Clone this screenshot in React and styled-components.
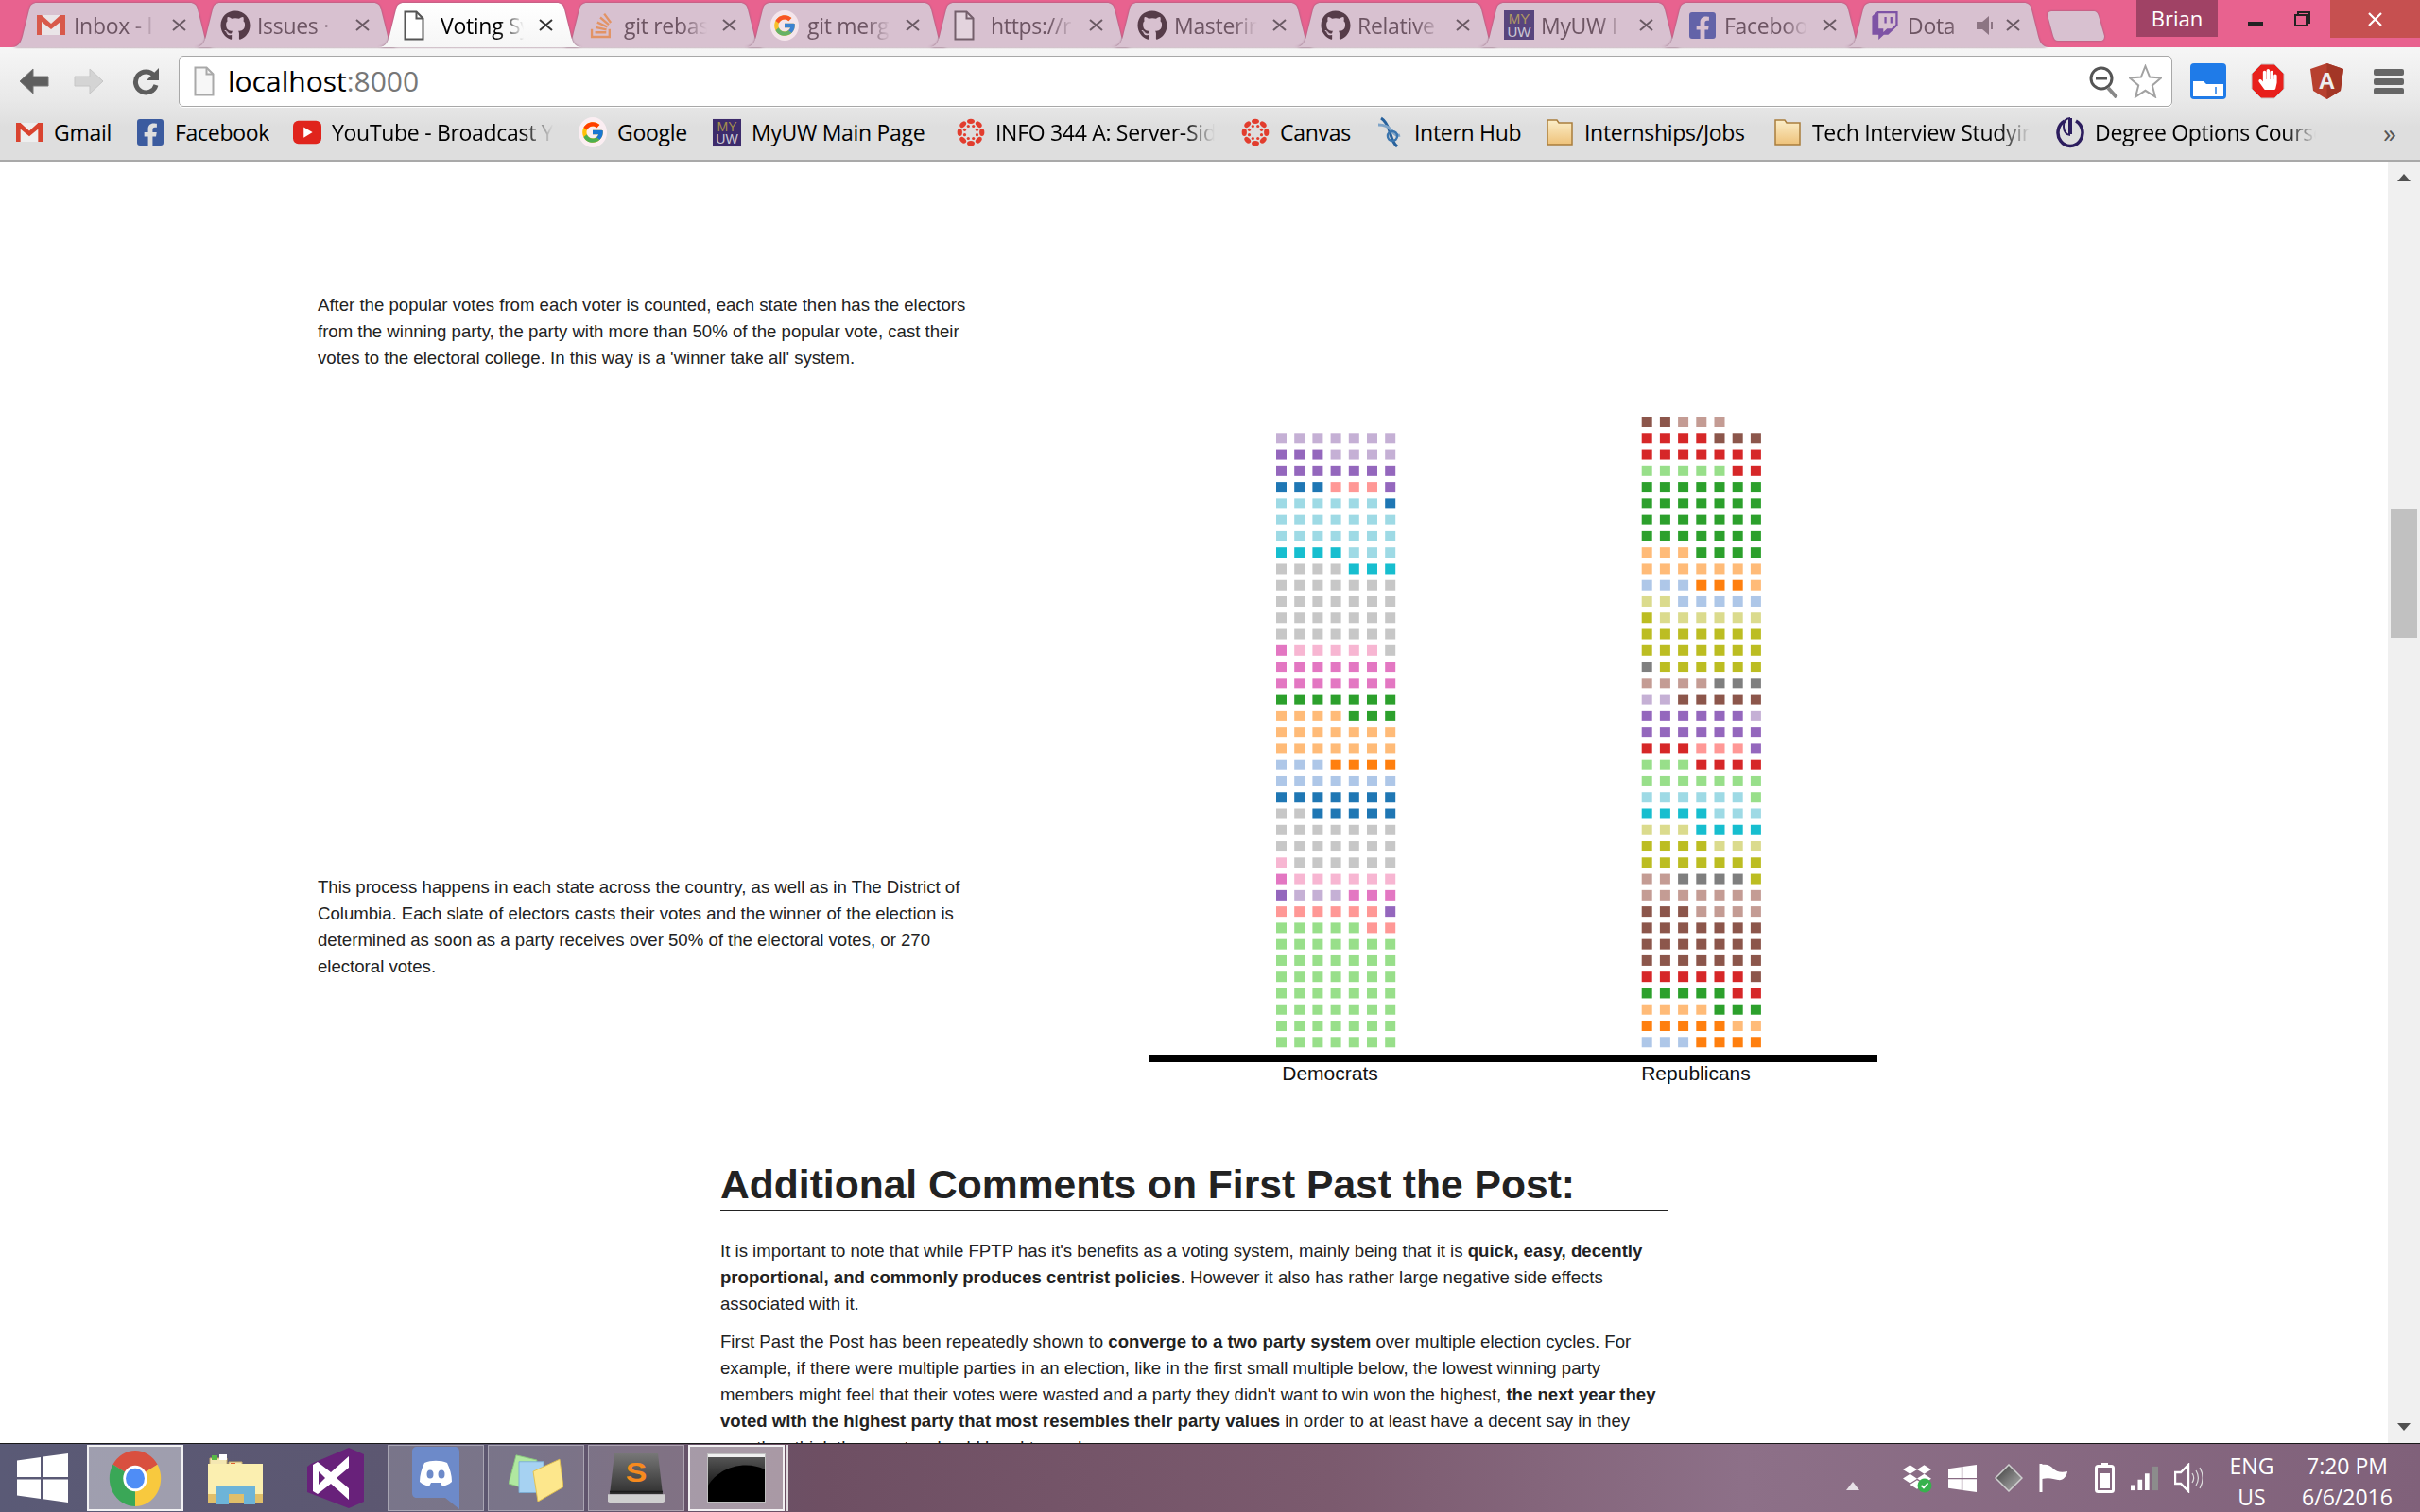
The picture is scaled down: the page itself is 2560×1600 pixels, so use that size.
import React from "react";
import styled, { createGlobalStyle } from "styled-components";
import { FaGithub, FaStackOverflow, FaFacebookSquare, FaTwitch, FaDropbox, FaHandPaper } from "react-icons/fa";
import { FcGoogle } from "react-icons/fc";

const GlobalStyle = createGlobalStyle`
  html, body {
    margin: 0;
    width: 2560px;
    height: 1600px;
    overflow: hidden;
    background: #fff;
  }
`;

const UI_FONT = `"Open Sans", "Noto Sans", sans-serif`;
const PAGE_FONT = `"Liberation Sans", Arial, sans-serif`;

const Screen = styled.div`
  width: 2560px;
  height: 1600px;
  display: flex;
  flex-direction: column;
  font-family: ${UI_FONT};
`;

/* ---------- tab strip ---------- */

const TabStrip = styled.div`
  height: 50px;
  flex: none;
  display: flex;
  align-items: flex-start;
  background: #e8628f;
`;

const TabRow = styled.div`
  display: flex;
  padding: 3px 0 0 12px;
`;

const Tab = styled.div`
  position: relative;
  width: 216px;
  height: 47px;
  margin-right: -22px;
  flex: none;
  display: flex;
  align-items: center;
  padding-left: 27px;
  box-sizing: border-box;
  z-index: ${(p) => (p.$active ? 2 : 1)};
  filter: drop-shadow(0 0 1px #8d5f78);
  color: ${(p) => (p.$active ? "#000" : "#6d5563")};

  &::before {
    content: "";
    position: absolute;
    inset: 0;
    background: ${(p) => (p.$active ? "linear-gradient(#fff, #f6f6f6)" : "#d8c1d0")};
    clip-path: path("M0 47 C9 47 11 40 13 31 L19 7 C20 2 23 0 27 0 L189 0 C193 0 196 2 197 7 L203 31 C205 40 207 47 216 47 Z");
  }

  & > * {
    position: relative;
  }
`;

const TabIcon = styled.span`
  width: 35px;
  margin-right: 4px;
  flex: none;
  display: flex;
  align-items: center;
  justify-content: flex-start;
  opacity: ${(p) => (p.$active ? 1 : 0.82)};
`;

const TabTitle = styled.span`
  width: ${(p) => p.$width}px;
  flex: none;
  font-size: 23px;
  letter-spacing: -0.3px;
  line-height: 30px;
  white-space: nowrap;
  overflow: hidden;
  -webkit-mask-image: linear-gradient(to right, #000 70%, transparent 100%);
  mask-image: linear-gradient(to right, #000 70%, transparent 100%);
`;

const TabSound = styled.span`
  width: 36px;
  flex: none;
  display: flex;
  justify-content: center;
  opacity: 0.7;
`;

const TabClose = styled.span`
  margin-left: ${(p) => p.$gap}px;
  display: flex;
  flex: none;
`;

const NewTab = styled.div`
  position: relative;
  width: 60px;
  height: 31px;
  margin: 12px 0 0 20px;
  filter: drop-shadow(0 0 1px #8d5f78);

  &::before {
    content: "";
    position: absolute;
    inset: 0;
    background: #d8c1d0;
    clip-path: path("M5 0 L48 0 C52 0 53 2 54 5 L60 26 C60 29 59 31 56 31 L11 31 C8 31 7 29 6 26 L0 4 C0 1 2 0 5 0 Z");
  }
`;

const WindowControls = styled.div`
  margin-left: auto;
  display: flex;
  align-items: flex-start;
`;

const ProfileName = styled.div`
  width: 86px;
  height: 39px;
  margin-right: 20px;
  background: #a04265;
  color: #fff;
  font-size: 22px;
  line-height: 39px;
  text-align: center;
`;

const CaptionButton = styled.div`
  width: ${(p) => p.$width}px;
  height: 40px;
  box-sizing: border-box;
  padding-top: ${(p) => p.$drop || 0}px;
  display: flex;
  align-items: center;
  justify-content: center;
  background: ${(p) => p.$bg || "transparent"};
`;

/* ---------- toolbar ---------- */

const BrowserChrome = styled.div`
  flex: none;
  background: linear-gradient(#f6f6f6 0%, #e9e9e9 45%, #dedede 70%, #dedede 100%);
`;

const Toolbar = styled.div`
  height: 63px;
  box-sizing: border-box;
  padding-top: 9px;
  display: flex;
  align-items: center;
`;

const NavButton = styled.div`
  width: ${(p) => p.$width}px;
  margin-left: ${(p) => p.$left}px;
  flex: none;
  display: flex;
  justify-content: center;
`;

const AddressBar = styled.div`
  width: 2109px;
  height: 54px;
  margin-left: 20px;
  padding: 0 10px 0 15px;
  box-sizing: border-box;
  flex: none;
  display: flex;
  align-items: center;
  background: #fff;
  border: 1px solid #a8a8a8;
  border-radius: 5px;
  box-shadow: 0 1px 0 #fff;
`;

const UrlHost = styled.span`
  margin-left: 14px;
  font-size: 30px;
  color: #000;
  line-height: 40px;
`;

const UrlPort = styled.span`
  color: #777;
`;

const AddressActions = styled.div`
  margin-left: auto;
  display: flex;
  align-items: center;
  gap: 11px;
`;

const ExtensionRow = styled.div`
  display: flex;
  align-items: center;
  margin-left: 19px;
`;

const ExtensionSlot = styled.div`
  width: ${(p) => p.$width}px;
  display: flex;
`;

/* ---------- bookmarks ---------- */

const BookmarkBar = styled.div`
  height: 58px;
  box-sizing: border-box;
  padding: 0 0 2px 16px;
  border-bottom: 2px solid #a9a9a9;
  display: flex;
  align-items: center;
`;

const Bookmark = styled.div`
  width: ${(p) => p.$width}px;
  flex: none;
  display: flex;
  align-items: center;
  gap: 11px;
`;

const BookmarkIcon = styled.span`
  width: 30px;
  flex: none;
  display: flex;
  justify-content: center;
`;

const BookmarkLabel = styled.span`
  font-size: 23px;
  letter-spacing: -0.3px;
  line-height: 32px;
  color: #000;
  white-space: nowrap;
  overflow: hidden;
  max-width: ${(p) => (p.$fade ? `${p.$fade}px` : "none")};
  ${(p) =>
    p.$fade
      ? `-webkit-mask-image: linear-gradient(to right, #000 86%, transparent 100%);
         mask-image: linear-gradient(to right, #000 86%, transparent 100%);`
      : ""}
`;

const MoreBookmarks = styled.span`
  margin-left: auto;
  margin-right: 25px;
  font-size: 28px;
  color: #555;
`;

/* ---------- page ---------- */

const Viewport = styled.div`
  flex: 1;
  min-height: 0;
  display: flex;
`;

const Page = styled.main`
  flex: 1;
  min-width: 0;
  overflow: hidden;
  background: #fff;
  font-family: ${PAGE_FONT};
  color: #222;
`;

const ChartSection = styled.section`
  display: flex;
  height: 989px;
`;

const StoryColumn = styled.div`
  width: 1026px;
  flex: none;
  box-sizing: border-box;
  padding: 138px 0 0 336px;
`;

const StoryText = styled.p`
  width: 692px;
  margin: 0 0 ${(p) => p.$after || 0}px;
  font-size: 18.6px;
  line-height: 28px;
`;

const ChartFigure = styled.figure`
  margin: 259px 0 0 189px;
`;

const Article = styled.article`
  width: 1002px;
  margin: 68px 0 0 762px;
`;

const ArticleTitle = styled.h2`
  margin: 0 0 28px;
  padding-bottom: 2px;
  font-size: 42.6px;
  line-height: 50px;
  font-weight: 700;
  color: #222;
  border-bottom: 2px solid #222;
`;

const ArticleText = styled.p`
  margin: 0 0 12px;
  padding-right: 6px;
  font-size: 18.6px;
  line-height: 28px;

  strong {
    font-weight: 700;
  }
`;

const Scrollbar = styled.div`
  width: 34px;
  flex: none;
  display: flex;
  flex-direction: column;
  align-items: center;
  background: #f0f0f0;
`;

const ScrollArrow = styled.div`
  height: 34px;
  flex: none;
  display: flex;
  align-items: center;
  justify-content: center;
`;

const ScrollThumb = styled.div`
  width: 28px;
  height: 136px;
  margin-top: 334px;
  background: #c1c1c1;
`;

const ScrollTrackFill = styled.div`
  flex: 1;
`;

/* ---------- taskbar ---------- */

const Taskbar = styled.footer`
  height: 73px;
  flex: none;
  box-sizing: border-box;
  border-top: 1px solid #1a1a1a;
  display: flex;
  align-items: stretch;
  background: linear-gradient(to right, #5a5a76 0%, #5d566f 22%, #6e4f63 34%, #7b5a6e 55%, #8d7088 72%, #80617a 100%);
`;

const StartButton = styled.div`
  width: 92px;
  flex: none;
  display: flex;
  align-items: center;
  justify-content: flex-start;
  padding-left: 18px;
  box-sizing: border-box;
`;

const TaskList = styled.div`
  display: flex;
  gap: 4px;
  padding-top: 1px;
`;

const TaskButton = styled.div`
  position: relative;
  width: 102px;
  height: 70px;
  box-sizing: border-box;
  display: flex;
  align-items: center;
  justify-content: center;
  border: ${(p) =>
    p.$state === "active"
      ? "2px solid rgba(255,255,255,.85)"
      : p.$state === "open"
      ? "1px solid rgba(255,255,255,.35)"
      : "1px solid transparent"};
  background: ${(p) =>
    p.$state === "active" ? "rgba(255,255,255,.42)" : p.$state === "open" ? "rgba(255,255,255,.18)" : "transparent"};

  ${(p) =>
    p.$stacked
      ? `&::after {
          content: "";
          position: absolute;
          top: -2px;
          right: -6px;
          bottom: -2px;
          width: 2px;
          background: rgba(255, 255, 255, 0.8);
        }`
      : ""}
`;

const Tray = styled.div`
  margin-left: auto;
  display: flex;
  align-items: center;
`;

const TrayIcon = styled.span`
  width: ${(p) => p.$width}px;
  margin-top: ${(p) => p.$drop || 0}px;
  flex: none;
  display: flex;
  justify-content: center;
`;

const TrayText = styled.div`
  width: ${(p) => p.$width}px;
  padding-top: 7px;
  flex: none;
  color: #fff;
  font-size: 23px;
  line-height: 33px;
  text-align: center;
`;

/* ---------- icons ---------- */

const GmailIcon = ({ w = 30, h = 21 }) => (
  <svg width={w} height={h} viewBox="0 0 30 21" preserveAspectRatio="none">
    <rect width="30" height="21" fill="#eeeeee" />
    <path d="M0 0h5v21H0zM25 0h5v21h-5z" fill="#d9432f" />
    <path d="M0 0h5l10 9 10-9h5v3L15 15 0 3z" fill="#d9432f" />
  </svg>
);

const DocIcon = ({ color = "#555", fill = "#fff" }) => (
  <svg width="22" height="32" viewBox="0 0 22 32">
    <path d="M1.5 1.5h12l7 7v22h-19z" fill={fill} stroke={color} strokeWidth="2" />
    <path d="M13.5 1.5v7h7" fill="none" stroke={color} strokeWidth="2" />
  </svg>
);

const GoogleIcon = () => (
  <svg width="30" height="32" viewBox="0 0 30 32">
    <ellipse cx="15" cy="16" rx="15" ry="16" fill="#fbeef2" />
    <foreignObject x="2" y="3" width="26" height="26">
      <FcGoogle size={26} />
    </foreignObject>
  </svg>
);

const MyUwIcon = ({ w = 32, h = 31 }) => (
  <svg width={w} height={h} viewBox="0 0 32 31">
    <rect width="32" height="31" fill="#3d2b6b" />
    <text x="16" y="14" fontSize="15" fontFamily="Liberation Sans" fill="#a58f4b" textAnchor="middle">MY</text>
    <text x="16" y="28" fontSize="15" fontFamily="Liberation Sans" fill="#c9c9d6" textAnchor="middle">UW</text>
  </svg>
);

const YouTubeIcon = () => (
  <svg width="32" height="30" viewBox="0 0 32 30">
    <rect x="0" y="2" width="32" height="26" rx="6" fill="#e0241c" />
    <path d="M12 9l10 6-10 6z" fill="#fff" />
  </svg>
);

const CanvasIcon = () => (
  <svg width="32" height="32" viewBox="0 0 32 32">
    <g fill="#e23d2e">
      {Array.from({ length: 8 }).map((_, i) => {
        const a = (i * Math.PI) / 4;
        return (
          <React.Fragment key={i}>
            <ellipse
              cx="16"
              cy="3.5"
              rx="4.2"
              ry="2.8"
              transform={`rotate(${(i * 360) / 8} 16 16)`}
            />
            <circle cx={16 + 7.5 * Math.cos(a + Math.PI / 8)} cy={16 + 7.5 * Math.sin(a + Math.PI / 8)} r="1.7" />
          </React.Fragment>
        );
      })}
    </g>
  </svg>
);

const InternHubIcon = () => (
  <svg width="30" height="34" viewBox="0 0 30 34">
    <path d="M6 2c5 3 7 8 9 14s3 12 8 16" fill="none" stroke="#27619c" strokeWidth="3" />
    <path d="M3 9c6 0 11 2 14 6s6 6 9 5" fill="none" stroke="#7fa4c8" strokeWidth="3" />
    <circle cx="18" cy="21" r="5" fill="none" stroke="#3b75ad" strokeWidth="2.5" />
  </svg>
);

const FolderIcon = () => (
  <svg width="28" height="32" viewBox="0 0 28 32">
    <defs>
      <linearGradient id="folderFill" x1="0" y1="0" x2="0" y2="1">
        <stop offset="0" stopColor="#fbeec9" />
        <stop offset="1" stopColor="#eec27a" />
      </linearGradient>
    </defs>
    <path d="M1 3h10l2 3h14v23H1z" fill="url(#folderFill)" stroke="#a97d3c" strokeWidth="1.5" />
  </svg>
);

const DegreeIcon = () => (
  <svg width="30" height="36" viewBox="0 0 30 36">
    <path d="M9 6a13 14 0 1 0 12 0" fill="none" stroke="#2c1d5e" strokeWidth="3.5" />
    <path d="M15 3c-5 0-7 4-7 9s3 9 7 9" fill="none" stroke="#2c1d5e" strokeWidth="2" />
    <rect x="13" y="3" width="4" height="17" fill="#2c1d5e" />
  </svg>
);

const CloseGlyph = ({ color = "#6a5a64" }) => (
  <svg width="15" height="13" viewBox="0 0 15 13">
    <path d="M1 1l13 11M14 1L1 12" stroke={color} strokeWidth="2" fill="none" />
  </svg>
);

const SoundGlyph = () => (
  <svg width="20" height="24" viewBox="0 0 20 24">
    <path d="M1 8h6l7-6v20l-7-6H1z" fill="#6d5563" />
    <path d="M17 8v8" stroke="#6d5563" strokeWidth="2" />
  </svg>
);

const BackIcon = ({ color, shadow }) => (
  <svg width="32" height="28" viewBox="0 0 32 28">
    <path d="M15 1L1 14l14 13v-8h16V9H15z" fill={color} stroke={shadow} strokeWidth="1" />
  </svg>
);

const ForwardIcon = () => (
  <svg width="32" height="28" viewBox="0 0 32 28">
    <path d="M17 1l14 13-14 13v-8H1V9h16z" fill="#d4d4d4" stroke="#c6c6c6" strokeWidth="1" />
  </svg>
);

const ReloadIcon = () => (
  <svg width="30" height="30" viewBox="0 0 30 30">
    <path d="M24 9a11 11 0 1 0 2 10" fill="none" stroke="#5c5c5c" strokeWidth="5" />
    <path d="M29 1v13H16z" fill="#5c5c5c" />
  </svg>
);

const ZoomOutIcon = () => (
  <svg width="31" height="35" viewBox="0 0 31 35">
    <circle cx="13" cy="14" r="11" fill="none" stroke="#555" strokeWidth="3" />
    <path d="M7 14h12" stroke="#555" strokeWidth="3" />
    <path d="M20 24l9 10" stroke="#888" strokeWidth="4" />
  </svg>
);

const StarIcon = () => (
  <svg width="35" height="36" viewBox="0 0 35 36">
    <path
      d="M17.5 2l4.6 11.5 12 .9-9.3 8 3.1 12.1-10.4-6.7-10.4 6.7 3.1-12.1-9.3-8 12-.9z"
      fill="#fff"
      stroke="#a2a2a2"
      strokeWidth="2"
    />
  </svg>
);

const DriveExtIcon = () => (
  <svg width="38" height="38" viewBox="0 0 38 38">
    <rect width="38" height="38" rx="4" fill="#1f7be8" />
    <path d="M3 19h11l3 3h18v13H3z" fill="#fff" />
    <path d="M27 25v7" stroke="#1f7be8" strokeWidth="1.5" />
  </svg>
);

const AdblockIcon = () => (
  <svg width="36" height="38" viewBox="0 0 36 38">
    <path d="M11 1h14l10 10v16L25 37H11L1 27V11z" fill="#e8201c" stroke="#c7c7c7" strokeWidth="1" />
    <foreignObject x="7" y="6" width="22" height="26">
      <FaHandPaper size={22} color="#fff" />
    </foreignObject>
  </svg>
);

const AngularIcon = () => (
  <svg width="35" height="38" viewBox="0 0 35 38">
    <path d="M17.5 0L35 6l-3 23-14.5 9L3 29 0 6z" fill="#b7402f" />
    <path d="M17.5 0L35 6l-3 23-14.5 9z" fill="#a33626" />
    <text x="17.5" y="27" fontSize="24" fontWeight="700" fontFamily="Liberation Sans" fill="#eee" textAnchor="middle">A</text>
  </svg>
);

const MenuIcon = () => (
  <svg width="32" height="27" viewBox="0 0 32 27">
    <rect width="32" height="7" rx="2" fill="#666" />
    <rect y="10" width="32" height="7" rx="2" fill="#666" />
    <rect y="20" width="32" height="7" rx="2" fill="#666" />
  </svg>
);

const WindowsLogo = ({ w = 54, h = 52, color = "#fff" }) => (
  <svg width={w} height={h} viewBox="0 0 54 52">
    <path d="M0 7.5l25-3.5v21H0zM27.5 3.5L54 0v25H27.5zM0 27.5h25V48L0 44.5zM27.5 27.5H54V52l-26.5-3.7z" fill={color} />
  </svg>
);

const ChromeLogo = () => (
  <svg width="58" height="63" viewBox="0 0 64 64" preserveAspectRatio="none">
    <path d="M32 32L6 17A30 30 0 0 1 58 17z" fill="#d9503f" />
    <path d="M32 32L58 17A30 30 0 0 1 32 62z" fill="#f8c93e" />
    <path d="M32 32L32 62A30 30 0 0 1 6 17z" fill="#3aa757" />
    <circle cx="32" cy="32" r="14" fill="#fff" />
    <circle cx="32" cy="32" r="11" fill="#4f8df6" />
  </svg>
);

const ExplorerIcon = () => (
  <svg width="58" height="55" viewBox="0 0 58 55">
    <path d="M2 6h18v8H2z" fill="#f4e7b2" stroke="#c9ad6b" />
    <path d="M12 2h8v6h-8z" fill="#fff" />
    <path d="M4 3h6v5H4z" fill="#58b848" />
    <path d="M22 10h14v6H22z" fill="#f4e7b2" stroke="#c9ad6b" />
    <path d="M24 11h5v4h-5z" fill="#e0612f" />
    <path d="M33 15h14v6H33z" fill="#f4e7b2" stroke="#c9ad6b" />
    <path d="M35 16h5v4h-5z" fill="#3b8fd8" />
    <path d="M0 12h58v41H0z" fill="#fbefb0" />
    <path d="M0 44h58v9H0z" fill="#e0bf6a" />
    <path d="M8 36h42v19H38V44H22v11H8z" fill="#6db4d8" />
  </svg>
);

const VsLogo = () => (
  <svg width="60" height="64" viewBox="0 0 60 64">
    <path d="M44 0l16 7v50l-16 7L0 47V20l4-3z" fill="#68217a" />
    <path d="M44 9v12l-13 11 13 11v12L25 38 11 49 6 46V18l5-3 14 11z" fill="#fff" />
    <path d="M12 25v14l7-7z" fill="#68217a" />
  </svg>
);

const DiscordIcon = () => (
  <svg width="50" height="66" viewBox="0 0 50 66">
    <path d="M5 0h40c3 0 5 2 5 5v61L35 54H5c-3 0-5-2-5-5V5c0-3 2-5 5-5z" fill="#6d8ac9" />
    <path d="M13 17c7-3 17-3 24 0 3 6 5 13 5 20-3 3-7 4-10 5l-2-4H20l-2 4c-3-1-7-2-10-5 0-7 2-14 5-20z" fill="#fff" />
    <ellipse cx="19" cy="29" rx="3.5" ry="4.5" fill="#6d8ac9" />
    <ellipse cx="31" cy="29" rx="3.5" ry="4.5" fill="#6d8ac9" />
  </svg>
);

const NotesIcon = () => (
  <svg width="58" height="50" viewBox="0 0 58 58" preserveAspectRatio="none">
    <path d="M8 1l22 6-6 37L0 36z" fill="#b0e8a0" stroke="#89c87c" />
    <path d="M11 9h26v38H11z" fill="#a6d2f2" stroke="#7caed6" />
    <path d="M54 6l4 34-27 18-5-37z" fill="#fde78c" stroke="#e0c050" />
  </svg>
);

const SublimeIcon = () => (
  <svg width="60" height="52" viewBox="0 0 60 60" preserveAspectRatio="none">
    <defs>
      <linearGradient id="sublimeBody" x1="0" y1="0" x2="0" y2="1">
        <stop offset="0" stopColor="#777" />
        <stop offset="1" stopColor="#2f2f2f" />
      </linearGradient>
    </defs>
    <path d="M7 0h46l5 50H2z" fill="url(#sublimeBody)" />
    <path d="M2 46h56v2H2z" fill="#1c1c1c" />
    <path d="M0 50h60v8a2 2 0 0 1-2 2H2a2 2 0 0 1-2-2z" fill="#cfcfcf" />
    <text x="30" y="35" fontSize="34" fontWeight="700" fontFamily="Liberation Sans" fill="#f68a1e" textAnchor="middle">S</text>
  </svg>
);

const TerminalIcon = () => (
  <svg width="62" height="52" viewBox="0 0 62 52">
    <defs>
      <linearGradient id="termGlow" x1="0" y1="0" x2="0" y2="1">
        <stop offset="0" stopColor="#555" />
        <stop offset="1" stopColor="#1a1a1a" />
      </linearGradient>
    </defs>
    <rect width="62" height="52" fill="#bfbfbf" />
    <rect x="1" y="1" width="60" height="3" fill="#f0f0f0" />
    <rect x="1" y="4" width="60" height="47" fill="#000" />
    <path d="M1 4h60v13C44 8 14 12 1 34z" fill="url(#termGlow)" />
  </svg>
);

const TrayArrow = () => (
  <svg width="14" height="9" viewBox="0 0 14 9">
    <path d="M7 0l7 9H0z" fill="#e6e0e6" />
  </svg>
);

const DropboxTray = () => (
  <svg width="31" height="32" viewBox="0 0 31 32">
    <foreignObject x="0" y="0" width="30" height="30">
      <FaDropbox size={30} color="#fff" />
    </foreignObject>
    <circle cx="23" cy="24" r="7.5" fill="#37b24d" />
    <path d="M19.5 24l2.5 2.5 4.5-5" stroke="#fff" strokeWidth="1.8" fill="none" />
  </svg>
);

const DiamondTray = () => (
  <svg width="30" height="30" viewBox="0 0 30 30">
    <defs>
      <linearGradient id="diamondFill" x1="0" y1="0" x2="1" y2="1">
        <stop offset="0" stopColor="#3a3a3a" />
        <stop offset="1" stopColor="#b5b5b5" />
      </linearGradient>
    </defs>
    <path d="M15 1l14 14-14 14L1 15z" fill="url(#diamondFill)" stroke="#cfcfcf" strokeWidth="1.5" />
  </svg>
);

const FlagTray = () => (
  <svg width="32" height="32" viewBox="0 0 32 32">
    <path d="M2 1v30" stroke="#fff" strokeWidth="3" />
    <path d="M3 2c6-1 9 1 12 4s8 5 15 3c-1 6-5 10-10 9s-9-3-17-1z" fill="#fff" />
  </svg>
);

const BatteryTray = () => (
  <svg width="21" height="32" viewBox="0 0 21 32">
    <path d="M7 0h7v3H7z" fill="#fff" />
    <rect x="1.5" y="3.5" width="18" height="27" rx="2" fill="none" stroke="#fff" strokeWidth="3" />
    <rect x="5" y="11" width="11" height="16" fill="#fff" />
  </svg>
);

const SignalTray = () => (
  <svg width="31" height="28" viewBox="0 0 31 28">
    <path d="M0 22h5v6H0z" fill="#fff" />
    <path d="M8 16h5v12H8zM16 9h5v19h-5z" fill="#fff" />
    <path d="M24 1h7v27h-7z" fill="#8c8c8c" />
  </svg>
);

const SpeakerTray = () => (
  <svg width="30" height="32" viewBox="0 0 30 32">
    <path d="M1 10h6l8-8v28l-8-8H1z" fill="none" stroke="#fff" strokeWidth="2.4" />
    <path d="M19 11c2 3 2 7 0 10M23 8c3 5 3 11 0 16M27 5c4 7 4 15 0 22" stroke="#ddd" strokeWidth="1.2" fill="none" />
  </svg>
);

/* ---------- data ---------- */

const TABS = [
  { title: "Inbox - l", icon: <GmailIcon /> },
  { title: "Issues · ", icon: <FaGithub size={32} color="#3a1f2c" /> },
  { title: "Voting System", icon: <DocIcon />, active: true },
  { title: "git rebase", icon: <FaStackOverflow size={30} color="#e58a4e" /> },
  { title: "git merge", icon: <GoogleIcon /> },
  { title: "https://r", icon: <DocIcon color="#5f4a56" fill="#e6d8e0" /> },
  { title: "Mastering", icon: <FaGithub size={32} color="#3a1f2c" /> },
  { title: "Relative", icon: <FaGithub size={32} color="#3a1f2c" /> },
  { title: "MyUW I", icon: <MyUwIcon /> },
  { title: "Facebook", icon: <FaFacebookSquare size={32} color="#4a4fa0" /> },
  { title: "Dota", icon: <FaTwitch size={30} color="#6b3b9c" />, sound: true },
];

const BOOKMARKS = [
  { label: "Gmail", width: 128, icon: <GmailIcon w={28} h={20} /> },
  { label: "Facebook", width: 166, icon: <FaFacebookSquare size={32} color="#3b5b9f" /> },
  { label: "YouTube - Broadcast Yourself", width: 302, fade: 234, icon: <YouTubeIcon /> },
  { label: "Google", width: 142, icon: <GoogleIcon /> },
  { label: "MyUW Main Page", width: 258, icon: <MyUwIcon /> },
  { label: "INFO 344 A: Server-Side", width: 301, fade: 232, icon: <CanvasIcon /> },
  { label: "Canvas", width: 142, icon: <CanvasIcon /> },
  { label: "Intern Hub", width: 180, icon: <InternHubIcon /> },
  { label: "Internships/Jobs", width: 241, icon: <FolderIcon /> },
  { label: "Tech Interview Studying", width: 299, fade: 230, icon: <FolderIcon /> },
  { label: "Degree Options Course", width: 290, fade: 234, icon: <DegreeIcon /> },
];

const TASKS = [
  { state: "active", icon: <ChromeLogo /> },
  { state: "idle", icon: <ExplorerIcon /> },
  { state: "idle", icon: <VsLogo /> },
  { state: "open", icon: <DiscordIcon /> },
  { state: "open", icon: <NotesIcon /> },
  { state: "open", icon: <SublimeIcon /> },
  { state: "active", icon: <TerminalIcon />, stacked: true },
];

const PALETTE = {
  a: "#1f77b4", b: "#aec7e8", c: "#ff7f0e", d: "#ffbb78", e: "#2ca02c",
  f: "#98df8a", g: "#d62728", h: "#ff9896", i: "#9467bd", j: "#c5b0d5",
  k: "#8c564b", l: "#c49c94", m: "#e377c2", n: "#f7b6d2", o: "#7f7f7f",
  p: "#c7c7c7", q: "#bcbd22", r: "#dbdb8d", s: "#17becf", t: "#9edae5",
};

const DEMOCRAT_ROWS = [
  "jjjjjjj", "iiijjjj", "iiiiiii", "aaahhhi", "tttttta", "ttttttt", "ttttttt", "ssssttt",
  "ppppsss", "ppppppp", "ppppppp", "ppppppp", "ppppppp", "mnnnnnp", "mmmmmmm", "mmmmmmm",
  "eeeeeee", "ddddeee", "ddddddd", "ddddddd", "bbbcccc", "bbbbbbb", "aaaaaaa", "ppaaaaa",
  "ppppppp", "ppppppp", "npppppp", "mnnnnnn", "ijjjmmm", "hhhhhhi", "fffffhh", "fffffff",
  "fffffff", "fffffff", "fffffff", "fffffff", "fffffff", "fffffff",
];

const REPUBLICAN_ROWS = [
  "kklll", "ggggkkk", "ggggggg", "fffffgg", "eeeeeee", "eeeeeee", "eeeeeee", "eeeeeee",
  "dddeeee", "ddddddd", "bbbcccd", "rrbbbbb", "qrrrrrr", "qqqqqqq", "qqqqqqq", "oqqqqqq",
  "llllooo", "jjkkkkk", "iiiiiij", "iiiiiii", "ggghhhi", "fffgggg", "fffffff", "ttttttf",
  "ssssttt", "rrrssss", "qqqqrrr", "qqqqqqq", "llooooq", "lllllll", "kkkllll", "kkkkkkk",
  "kkkkkkk", "kkkkkkk", "ggggggk", "eeeeegg", "ddddeee", "cccccdd", "bbbcccc",
];

/* chart coordinates are relative to the svg's origin (x 1215, y 430 on screen) */
const CELL = 11;
const COL_STEP = 19.2;
const ROW_STEP = 17.27;

function VoteBlock({ rows, x, y }) {
  return rows.map((row, r) =>
    row.split("").map((code, c) => (
      <rect
        key={`${r}-${c}`}
        x={x + c * COL_STEP}
        y={y + r * ROW_STEP}
        width={CELL}
        height={CELL}
        fill={PALETTE[code]}
      />
    ))
  );
}

function VoteChart() {
  return (
    <svg width="772" height="730" viewBox="0 0 772 730">
      <VoteBlock rows={DEMOCRAT_ROWS} x={135} y={28.3} />
      <VoteBlock rows={REPUBLICAN_ROWS} x={521.7} y={11} />
      <rect x="0" y="686" width="771" height="8" fill="#000" />
      <text x="192" y="713" fontSize="21" fill="#111" textAnchor="middle" fontFamily={PAGE_FONT}>Democrats</text>
      <text x="579" y="713" fontSize="21" fill="#111" textAnchor="middle" fontFamily={PAGE_FONT}>Republicans</text>
    </svg>
  );
}

export default function App() {
  return (
    <Screen>
      <GlobalStyle />
      <TabStrip>
        <TabRow>
          {TABS.map((tab) => (
            <Tab key={tab.title} $active={tab.active}>
              <TabIcon $active={tab.active}>{tab.icon}</TabIcon>
              <TabTitle $width={tab.sound ? 64 : 88}>{tab.title}</TabTitle>
              {tab.sound && (
                <TabSound>
                  <SoundGlyph />
                </TabSound>
              )}
              <TabClose $gap={tab.sound ? 4 : 16}>
                <CloseGlyph color={tab.active ? "#333" : "#6a5a64"} />
              </TabClose>
            </Tab>
          ))}
        </TabRow>
        <NewTab />
        <WindowControls>
          <ProfileName>Brian</ProfileName>
          <CaptionButton $width={40} $drop={10}>
            <svg width="16" height="5" viewBox="0 0 16 5">
              <rect width="16" height="5" fill="#222" />
            </svg>
          </CaptionButton>
          <CaptionButton $width={59}>
            <svg width="17" height="16" viewBox="0 0 17 16">
              <path d="M4 3V1h12v11h-2" fill="none" stroke="#222" strokeWidth="2" />
              <rect x="1" y="4" width="12" height="11" fill="none" stroke="#222" strokeWidth="2" />
            </svg>
          </CaptionButton>
          <CaptionButton $width={95} $bg="#c65050">
            <svg width="15" height="15" viewBox="0 0 15 15">
              <path d="M1 1l13 13M14 1L1 14" stroke="#fff" strokeWidth="2.2" />
            </svg>
          </CaptionButton>
        </WindowControls>
      </TabStrip>

      <BrowserChrome>
        <Toolbar>
          <NavButton $width={32} $left={20}>
            <BackIcon color="#5f5f5f" shadow="#777" />
          </NavButton>
          <NavButton $width={32} $left={26}>
            <ForwardIcon />
          </NavButton>
          <NavButton $width={30} $left={29}>
            <ReloadIcon />
          </NavButton>
          <AddressBar>
            <DocIcon color="#a9a9a9" fill="#f7f7f7" />
            <UrlHost>
              localhost<UrlPort>:8000</UrlPort>
            </UrlHost>
            <AddressActions>
              <ZoomOutIcon />
              <StarIcon />
            </AddressActions>
          </AddressBar>
          <ExtensionRow>
            <ExtensionSlot $width={64}>
              <DriveExtIcon />
            </ExtensionSlot>
            <ExtensionSlot $width={63}>
              <AdblockIcon />
            </ExtensionSlot>
            <ExtensionSlot $width={67}>
              <AngularIcon />
            </ExtensionSlot>
            <ExtensionSlot $width={32}>
              <MenuIcon />
            </ExtensionSlot>
          </ExtensionRow>
        </Toolbar>
        <BookmarkBar>
          {BOOKMARKS.map((b) => (
            <Bookmark key={b.label} $width={b.width}>
              <BookmarkIcon>{b.icon}</BookmarkIcon>
              <BookmarkLabel $fade={b.fade}>{b.label}</BookmarkLabel>
            </Bookmark>
          ))}
          <MoreBookmarks>»</MoreBookmarks>
        </BookmarkBar>
      </BrowserChrome>

      <Viewport>
        <Page>
          <ChartSection>
            <StoryColumn>
              <StoryText $after={532}>
                After the popular votes from each voter is counted, each state then has the electors from the winning
                party, the party with more than 50% of the popular vote, cast their votes to the electoral college. In
                this way is a 'winner take all' system.
              </StoryText>
              <StoryText>
                This process happens in each state across the country, as well as in The District of Columbia. Each
                slate of electors casts their votes and the winner of the election is determined as soon as a party
                receives over 50% of the electoral votes, or 270 electoral votes.
              </StoryText>
            </StoryColumn>
            <ChartFigure>
              <VoteChart />
            </ChartFigure>
          </ChartSection>
          <Article>
            <ArticleTitle>Additional Comments on First Past the Post:</ArticleTitle>
            <ArticleText>
              It is important to note that while FPTP has it's benefits as a voting system, mainly being that it is{" "}
              <strong>quick, easy, decently proportional, and commonly produces centrist policies</strong>. However it
              also has rather large negative side effects associated with it.
            </ArticleText>
            <ArticleText>
              First Past the Post has been repeatedly shown to <strong>converge to a two party system</strong> over
              multiple election cycles. For example, if there were multiple parties in an election, like in the first
              small multiple below, the lowest winning party members might feel that their votes were wasted and a party
              they didn't want to win won the highest,{" "}
              <strong>the next year they voted with the highest party that most resembles their party values</strong> in
              order to at least have a decent say in they way they think the country should head towards.
            </ArticleText>
          </Article>
        </Page>
        <Scrollbar>
          <ScrollArrow>
            <svg width="14" height="8" viewBox="0 0 14 8">
              <path d="M7 0l7 8H0z" fill="#505050" />
            </svg>
          </ScrollArrow>
          <ScrollThumb />
          <ScrollTrackFill />
          <ScrollArrow>
            <svg width="14" height="8" viewBox="0 0 14 8">
              <path d="M7 8l7-8H0z" fill="#505050" />
            </svg>
          </ScrollArrow>
        </Scrollbar>
      </Viewport>

      <Taskbar>
        <StartButton>
          <WindowsLogo />
        </StartButton>
        <TaskList>
          {TASKS.map((task, i) => (
            <TaskButton key={i} $state={task.state} $stacked={task.stacked}>
              {task.icon}
            </TaskButton>
          ))}
        </TaskList>
        <Tray>
          <TrayIcon $width={92} $drop={16}><TrayArrow /></TrayIcon>
          <TrayIcon $width={44}><DropboxTray /></TrayIcon>
          <TrayIcon $width={52}><WindowsLogo w={30} h={29} /></TrayIcon>
          <TrayIcon $width={45}><DiamondTray /></TrayIcon>
          <TrayIcon $width={51}><FlagTray /></TrayIcon>
          <TrayIcon $width={56}><BatteryTray /></TrayIcon>
          <TrayIcon $width={29}><SignalTray /></TrayIcon>
          <TrayIcon $width={63}><SpeakerTray /></TrayIcon>
          <TrayText $width={72}>
            ENG
            <br />
            US
          </TrayText>
          <TrayText $width={130}>
            7:20 PM
            <br />
            6/6/2016
          </TrayText>
          <TrayIcon $width={12} />
        </Tray>
      </Taskbar>
    </Screen>
  );
}
